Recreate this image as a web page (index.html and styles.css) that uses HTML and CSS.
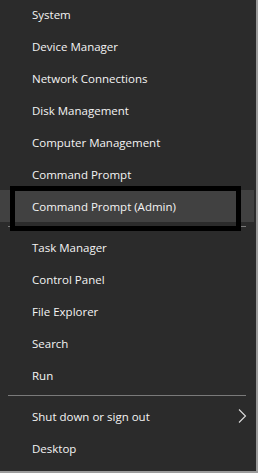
FILE: index.html
```html
<!DOCTYPE html>
<html lang="en">
<head>
    <meta charset="UTF-8">
    <title>Quick Link Menu</title>
    <link rel="stylesheet" href="styles.css">
</head>
<body>
    <div class="menu">
        <ul class="group group-first">
            <li class="item">System</li>
            <li class="item">Device Manager</li>
            <li class="item">Network Connections</li>
            <li class="item">Disk Management</li>
            <li class="item">Computer Management</li>
            <li class="item">Command Prompt</li>
            <li class="item active">Command Prompt (Admin)<span class="callout"></span></li>
        </ul>
        <div class="separator sep-first"></div>
        <ul class="group">
            <li class="item">Task Manager</li>
            <li class="item">Control Panel</li>
            <li class="item">File Explorer</li>
            <li class="item">Search</li>
            <li class="item">Run</li>
        </ul>
        <div class="separator"></div>
        <ul class="group">
            <li class="item has-sub">Shut down or sign out
                <svg class="chevron" width="9" height="14" viewBox="0 0 9 14">
                    <polyline points="1,0.5 7.5,7 1,13.5" fill="none" stroke="#dcdcdc" stroke-width="1.1"/>
                </svg>
            </li>
            <li class="item">Desktop</li>
        </ul>
    </div>
</body>
</html>
```

FILE: styles.css
```css
body {
    margin: 0;
    background-color: #9c9c9c;
    font-family: "Open Sans", "Noto Sans", sans-serif;
}
.menu {
    width: 256px;
    height: 471px;
    background-color: #2b2b2b;
    overflow: hidden;
}
.group {
    list-style: none;
    margin: 0;
    padding: 0;
}
.group-first {
    margin-top: -2px;
}
.item {
    position: relative;
    display: flex;
    align-items: center;
    height: 32px;
    margin-right: 2px;
    padding-left: 32px;
    color: #f4f4f4;
    font-size: 11.5px;
}
.item.active {
    background-color: #414141;
}
.callout {
    position: absolute;
    top: -4px;
    left: 10px;
    width: 221px;
    height: 35px;
    border: 5px solid #000;
}
.has-sub .chevron {
    position: absolute;
    left: 238px;
    top: 9px;
}
.separator {
    height: 1px;
    margin: 4px 10px 4px 8px;
    background-color: #7a7a7a;
}
.sep-first {
    margin-top: 4px;
}
```
